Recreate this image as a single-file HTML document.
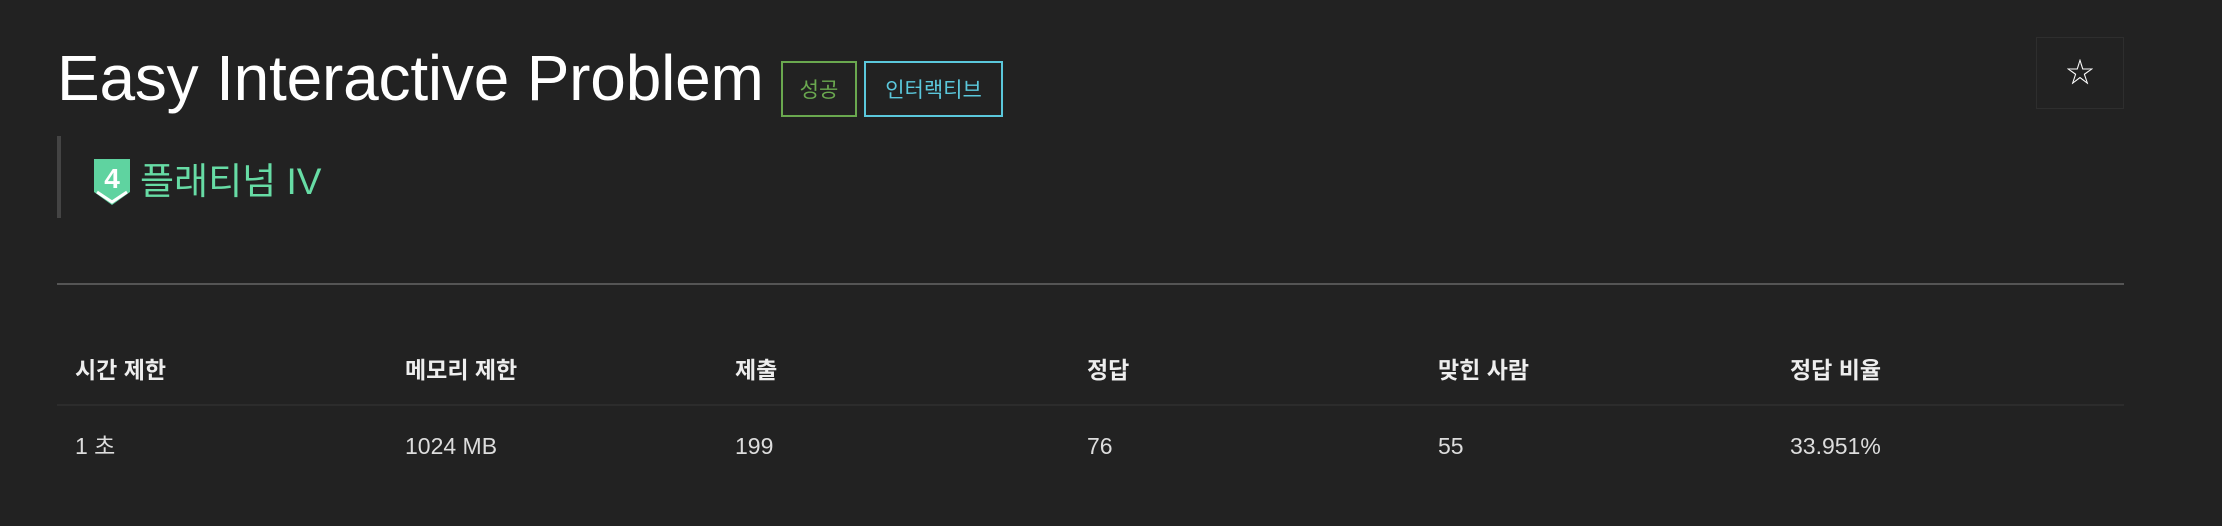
<!DOCTYPE html>
<html><head><meta charset="utf-8"><style>
body{margin:0;width:2222px;height:526px;background:#222;font-family:"Liberation Sans","Noto Sans CJK KR",sans-serif;position:relative;overflow:hidden;color:#eee}
.a{position:absolute;white-space:nowrap}
.title{left:57px;top:38px;font-size:64px;color:#fff;letter-spacing:-0.2px;line-height:80px}
.badge{top:61px;height:52px;border:2px solid;font-size:21px;line-height:56px;text-align:center;box-sizing:content-box}
.th{top:355px;font-size:23px;font-weight:bold;color:#eee;line-height:30px}
.td{top:431px;font-size:23px;color:#ddd;line-height:30px}
</style></head><body>
<div class="a title">Easy Interactive Problem</div>
<div class="a badge" style="left:781px;width:72px;border-color:#6aa84f;color:#6aa84f">성공</div>
<div class="a badge" style="left:864px;width:135px;border-color:#5bc8dc;color:#5bc8dc">인터랙티브</div>
<div class="a" style="left:57px;top:136px;width:4px;height:82px;background:#444"></div>
<svg class="a" style="left:94px;top:159px" width="36" height="46" viewBox="0 0 36 46">
<path d="M0 0H36V33L18 46L0 33Z" fill="#5fd3a0"/>
<path d="M3 33L18 43L33 33" stroke="#fff" stroke-width="3" fill="none"/>
<text x="18" y="29" font-family="Liberation Sans" font-weight="bold" font-size="28" fill="#fff" text-anchor="middle">4</text>
</svg>
<div class="a" style="left:140px;top:151px;font-size:37px;color:#67dca5">플래티넘 IV</div>
<div class="a" style="left:2036px;top:37px;width:86px;height:70px;border:1px solid #2e2e2e"></div>
<div class="a" style="left:2066px;top:55px;font-size:28px;line-height:36px;color:#fff">☆</div>
<div class="a" style="left:57px;top:283px;width:2067px;height:2px;background:#555"></div>
<div class="a th" style="left:75px">시간 제한</div>
<div class="a th" style="left:405px">메모리 제한</div>
<div class="a th" style="left:735px">제출</div>
<div class="a th" style="left:1087px">정답</div>
<div class="a th" style="left:1438px">맞힌 사람</div>
<div class="a th" style="left:1790px">정답 비율</div>
<div class="a" style="left:57px;top:404px;width:2067px;height:2px;background:#2c2c2c"></div>
<div class="a td" style="left:75px">1 초</div>
<div class="a td" style="left:405px">1024 MB</div>
<div class="a td" style="left:735px">199</div>
<div class="a td" style="left:1087px">76</div>
<div class="a td" style="left:1438px">55</div>
<div class="a td" style="left:1790px">33.951%</div>
</body></html>
